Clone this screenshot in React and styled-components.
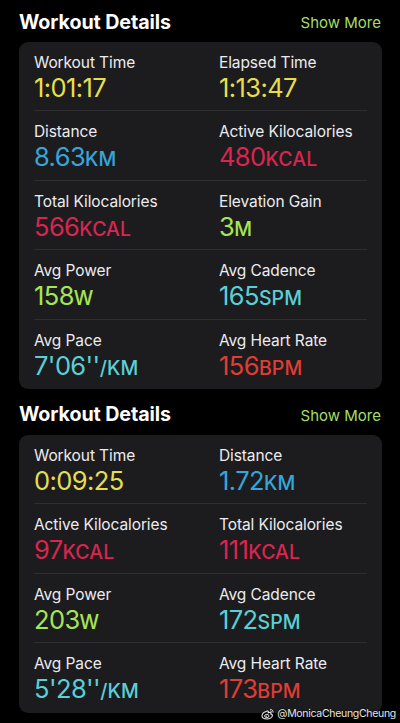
import React from "react";
import styled, { createGlobalStyle } from "styled-components";

const Global = createGlobalStyle`
  html, body { margin: 0; padding: 0; background: #000; }
  body { font-family: Inter, "Noto Sans", sans-serif; -webkit-font-smoothing: antialiased; }
`;

const Page = styled.div`
  position: relative;
  width: 400px;
  height: 723px;
  overflow: hidden;
  background: #000;
  box-sizing: border-box;
  padding: 1px 18px 0 19px;
  display: flex;
  flex-direction: column;
  gap: 5px;
`;

const Section = styled.section`
  display: flex;
  flex-direction: column;
`;

const Header = styled.div`
  height: 41px;
  display: flex;
  align-items: center;
  justify-content: space-between;
  box-sizing: border-box;
`;

const Title = styled.h2`
  margin: 0;
  font-size: 19.7px;
  font-weight: 700;
  color: #fff;
  letter-spacing: -0.1px;
`;

const ShowMore = styled.span`
  font-size: 15px;
  color: #a4de6a;
  margin-right: 1px;
  padding-top: 2px;
`;

const Card = styled.div`
  background: #1c1c1e;
  border-radius: 9px;
  padding: 0 15px;
`;

const Row = styled.div`
  display: grid;
  grid-template-columns: 185px 1fr;
  height: 69.4px;
  box-sizing: border-box;
  border-bottom: 1px solid #2e2e31;
  &:last-child { border-bottom: none; }
`;

const Metric = styled.div`
  padding-top: 11px;
  display: flex;
  flex-direction: column;
`;

const Label = styled.div`
  font-size: 15.5px;
  line-height: 20px;
  color: #ececf0;
  letter-spacing: -0.1px;
`;

const Value = styled.div`
  font-size: 25.5px;
  line-height: 30px;
  color: ${(p) => p.$color};
  font-weight: 400;
  letter-spacing: -0.6px;
`;

const Unit = styled.span`
  font-size: 19.5px;
  font-weight: 500;
  letter-spacing: 0.1px;
`;

const Watermark = styled.div`
  position: absolute;
  right: 4px;
  bottom: 3px;
  display: flex;
  align-items: center;
  gap: 2px;
  font-family: Inter, "Noto Sans", sans-serif;
  font-size: 10.5px;
  letter-spacing: -0.3px;
  color: #e6e6e6;
  text-shadow: 0 0 2px rgba(0,0,0,0.8);
`;

const C = {
  yellow: "#e6df4c",
  blue: "#35a6dc",
  pink: "#d9254f",
  green: "#a6e553",
  cyan: "#5ad0d6",
  red: "#e03d35",
};

const first = [
  [
    { label: "Workout Time", value: "1:01:17", color: C.yellow },
    { label: "Elapsed Time", value: "1:13:47", color: C.yellow },
  ],
  [
    { label: "Distance", value: "8.63", unit: "KM", color: C.blue },
    { label: "Active Kilocalories", value: "480", unit: "KCAL", color: C.pink },
  ],
  [
    { label: "Total Kilocalories", value: "566", unit: "KCAL", color: C.pink },
    { label: "Elevation Gain", value: "3", unit: "M", color: C.green },
  ],
  [
    { label: "Avg Power", value: "158", unit: "W", color: C.green },
    { label: "Avg Cadence", value: "165", unit: "SPM", color: C.cyan },
  ],
  [
    { label: "Avg Pace", value: "7'06''", unit: "/KM", color: C.cyan },
    { label: "Avg Heart Rate", value: "156", unit: "BPM", color: C.red },
  ],
];

const second = [
  [
    { label: "Workout Time", value: "0:09:25", color: C.yellow },
    { label: "Distance", value: "1.72", unit: "KM", color: C.blue },
  ],
  [
    { label: "Active Kilocalories", value: "97", unit: "KCAL", color: C.pink },
    { label: "Total Kilocalories", value: "111", unit: "KCAL", color: C.pink },
  ],
  [
    { label: "Avg Power", value: "203", unit: "W", color: C.green },
    { label: "Avg Cadence", value: "172", unit: "SPM", color: C.cyan },
  ],
  [
    { label: "Avg Pace", value: "5'28''", unit: "/KM", color: C.cyan },
    { label: "Avg Heart Rate", value: "173", unit: "BPM", color: C.red },
  ],
];

function Details({ rows }) {
  return (
    <Section>
      <Header>
        <Title>Workout Details</Title>
        <ShowMore>Show More</ShowMore>
      </Header>
      <Card>
        {rows.map((row, i) => (
          <Row key={i}>
            {row.map((m) => (
              <Metric key={m.label}>
                <Label>{m.label}</Label>
                <Value $color={m.color}>
                  {m.value}
                  {m.unit && <Unit>{m.unit}</Unit>}
                </Value>
              </Metric>
            ))}
          </Row>
        ))}
      </Card>
    </Section>
  );
}

function WeiboIcon() {
  return (
    <svg width="14" height="12" viewBox="0 0 14 12" fill="none">
      <path
        d="M5.6 3.2C3.2 4 1 6 1 7.8 1 9.9 3.6 11 6 11c3.2 0 5.4-1.8 5.4-3.4 0-1-.9-1.5-1.6-1.7.3-.6.3-1.3-.3-1.5-.6-.2-1.7.2-2.2.4.2-.6.3-1.3-.2-1.6-.4-.3-1 0-1.5 0z"
        stroke="#e6e6e6"
        strokeWidth="1.1"
      />
      <ellipse cx="5.8" cy="8" rx="2.2" ry="1.6" stroke="#e6e6e6" strokeWidth="1" />
      <circle cx="5.4" cy="8.2" r="0.6" fill="#e6e6e6" />
      <path d="M9.6 1.4c1.5 0 2.6 1.2 2.4 2.7" stroke="#e6e6e6" strokeWidth="1" strokeLinecap="round" />
      <path d="M9.6 2.9c.6 0 1 .5.9 1" stroke="#e6e6e6" strokeWidth="0.9" strokeLinecap="round" />
    </svg>
  );
}

export default function App() {
  return (
    <>
      <Global />
      <Page>
        <Details rows={first} />
        <Details rows={second} />
        <Watermark>
          <WeiboIcon />
          <span>@MonicaCheungCheung</span>
        </Watermark>
      </Page>
    </>
  );
}
